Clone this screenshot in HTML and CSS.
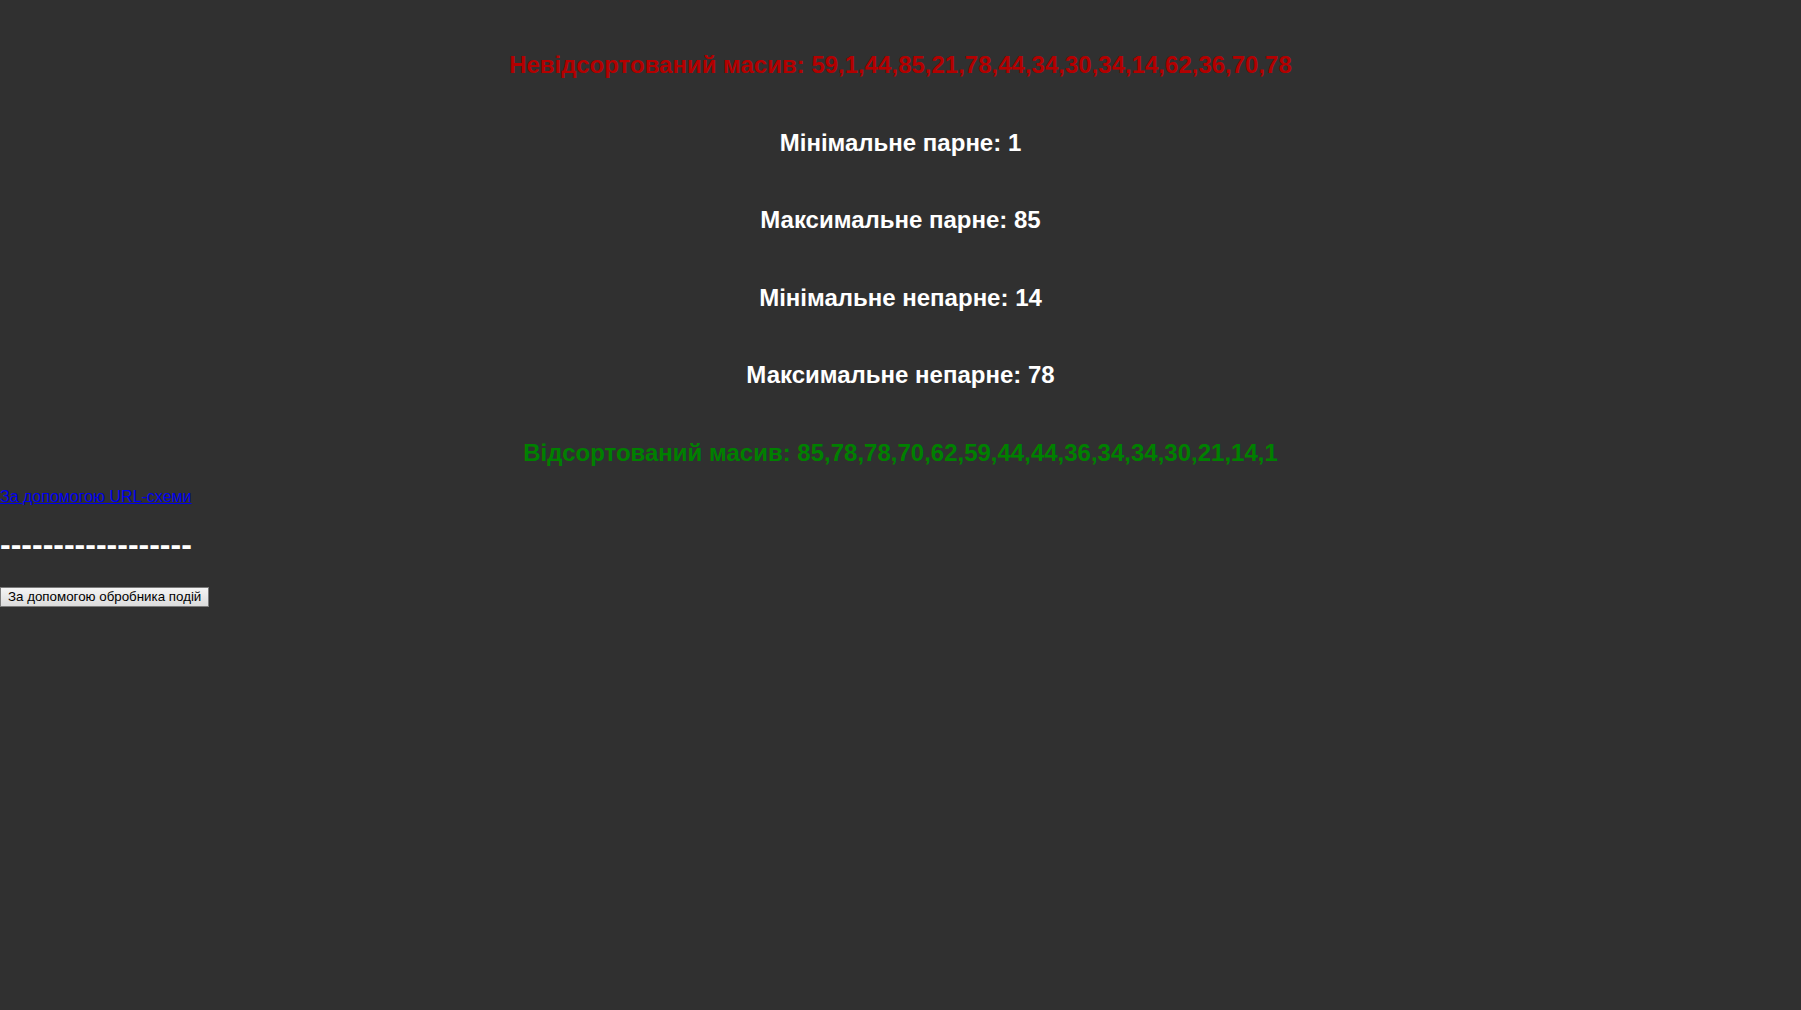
FILE: index.html
```html
<!DOCTYPE html>
<html lang="uk">
<head>
<meta charset="utf-8">
<title>Масив</title>
<link rel="stylesheet" href="styles.css">
</head>
<body>
<main class="report">
  <h2 class="line line-unsorted">Невідсортований масив: 59,1,44,85,21,78,44,34,30,34,14,62,36,70,78</h2>
  <h2 class="line">Мінімальне парне: 1</h2>
  <h2 class="line">Максимальне парне: 85</h2>
  <h2 class="line">Мінімальне непарне: 14</h2>
  <h2 class="line">Максимальне непарне: 78</h2>
  <h2 class="line line-sorted">Відсортований масив: 85,78,78,70,62,59,44,44,36,34,34,30,21,14,1</h2>
</main>
<div class="links">
  <a class="url-link" href="#">За допомогою URL-схеми</a>
</div>
<h1 class="divider">------------------</h1>
<div class="actions">
  <button class="event-btn" type="button">За допомогою обробника подій</button>
</div>
</body>
</html>
```
FILE: styles.css
```css
html, body {
  margin: 0;
  padding: 0;
}

body {
  background: #303030;
  font-family: "Liberation Sans", Arial, sans-serif;
  font-size: 16px;
  color: #ffffff;
}

.report {
  padding-top: 51px;
}

.line {
  margin: 0 0 50px;
  font-size: 24px;
  font-weight: bold;
  line-height: 27.6px;
  text-align: center;
  color: #ffffff;
}

.line-unsorted {
  color: #b40000;
}

.line-sorted {
  color: #008000;
  margin-bottom: 21px;
}

.links {
  line-height: 18.4px;
}

.url-link {
  color: #0000ee;
  text-decoration: underline;
}

.divider {
  margin: 20.44px 0 21.44px;
  font-size: 32px;
  font-weight: bold;
  line-height: 36.8px;
  color: #ffffff;
}

.actions {
  padding-top: 2px;
  line-height: 18.4px;
}

.event-btn {
  font-family: "Liberation Sans", Arial, sans-serif;
  font-size: 13.333px;
  line-height: 16px;
  color: #000000;
  padding: 1px 7px;
  margin: 0;
  border: 1px solid #7a7a7a;
  border-radius: 0;
  background: linear-gradient(#f4f4f4, #dcdcdc);
}
```
